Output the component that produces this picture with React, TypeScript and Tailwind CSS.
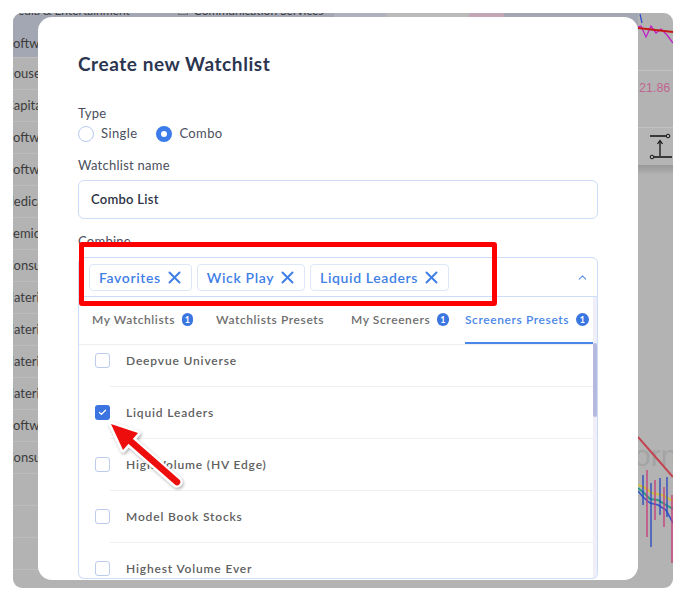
import { ChevronUp, Check } from 'lucide-react'

// the first letter of each sector slides under the left edge, so each row carries its own offset
const sectors = [
  { name: 'Household', shift: 'ml-[-9px]' },
  { name: 'Capital Markets', shift: 'ml-[-8px]' },
  { name: 'Software', shift: 'ml-[-7px]' },
  { name: 'Software', shift: 'ml-[-7px]' },
  { name: 'Medical Devices', shift: 'ml-[-11px]' },
  { name: 'Semiconductors', shift: 'ml-[-7px]' },
  { name: 'Consumer Finance', shift: 'ml-[-8px]' },
  { name: 'Materials', shift: 'ml-[-11px]' },
  { name: 'Materials', shift: 'ml-[-11px]' },
  { name: 'Materials', shift: 'ml-[-11px]' },
  { name: 'Materials', shift: 'ml-[-11px]' },
  { name: 'Software', shift: 'ml-[-7px]' },
  { name: 'Consumer Finance', shift: 'ml-[-8px]' },
  { name: '', shift: '' },
  { name: '', shift: '' },
  { name: '', shift: '' },
  { name: '', shift: '' },
]

const chips = ['Favorites', 'Wick Play', 'Liquid Leaders']

const tabs = [
  { label: 'My Watchlists', count: 1, width: 'w-[101px]', gap: '' },
  { label: 'Watchlists Presets', count: 0, width: 'w-[111px]', gap: 'ml-[23px]' },
  { label: 'My Screeners', count: 1, width: 'w-[98px]', gap: 'ml-[24px]' },
  { label: 'Screeners Presets', count: 1, width: 'w-[128px]', gap: 'ml-[16px]', active: true },
]

const presets = [
  { name: 'Deepvue Universe', checked: false },
  { name: 'Liquid Leaders', checked: true },
  { name: 'High Volume (HV Edge)', checked: false },
  { name: 'Model Book Stocks', checked: false },
  { name: 'Highest Volume Ever', checked: false },
]

function Badge({ n }: { n: number }) {
  return (
    <span className="ml-[7px] w-[13px] h-[13px] rounded-full bg-[#3a76e0] text-white text-[9px] font-bold leading-none flex items-center justify-center">
      {n}
    </span>
  )
}

function RemoveIcon() {
  return (
    <svg width="13" height="13" viewBox="0 0 13 13" className="ml-[7px]">
      <path d="M1.5 1.5 L11.5 11.5 M11.5 1.5 L1.5 11.5" stroke="currentColor" strokeWidth="2" strokeLinecap="round" />
    </svg>
  )
}

// dimmed table that sits behind the dialog
function SectorColumn() {
  return (
    <div className="flex-1 flex flex-col text-[13px] text-[#3c3c3c]">
      <div className="h-[44px] shrink-0 bg-[#a3a7b3] flex flex-col overflow-hidden">
        <div className="-mt-[8px] h-[12px] leading-[12px] flex items-center whitespace-nowrap text-[12px]">
          <span className="ml-[-6px]">Media &amp; Entertainment</span>
          <span className="ml-[48px] w-[10px] h-[8px] border border-[#777]" />
          <span className="ml-[6px]">Communication Services</span>
          <span className="ml-[10px] w-[52px] h-[12px] bg-[#aeb2bd]" />
          <span className="w-[83px] h-[12px] bg-[#bababa]" />
          <span className="w-[35px] h-[12px] bg-[#c2a6b6]" />
        </div>
        <div className="mt-auto pb-[6px] ml-[-7px] leading-[16px]">Software</div>
      </div>
      {sectors.map((s, i) => (
        <div
          key={i}
          className="h-[32px] shrink-0 border-t border-[#bdbdbd] flex items-center whitespace-nowrap"
        >
          <span className={s.shift}>{s.name}</span>
        </div>
      ))}
    </div>
  )
}

function SidePanel() {
  return (
    <div className="w-[35px] shrink-0 flex flex-col">
      <div className="h-[58px] shrink-0 border-b border-[#c2c2c2]">
        <svg width="35" height="58" viewBox="0 0 35 58">
          <polyline points="2,1 4,10" stroke="#2848d0" strokeWidth="1.2" fill="none" />
          <polyline
            points="0,14 3,13 8,24 13,13 18,20 23,16 29,22 35,30"
            stroke="#c020c8"
            strokeWidth="1.3"
            fill="none"
          />
          <line x1="0" y1="15" x2="35" y2="19" stroke="#c41818" strokeWidth="2" />
        </svg>
      </div>
      <div className="h-[57px] shrink-0 border-b border-[#c2c2c2] pt-[8px] pl-[1px] text-[12.5px] text-[#c06690] font-['Liberation_Sans',sans-serif]">
        21.86
      </div>
      <div className="h-[37px] shrink-0 bg-[#b5b5b5]">
        <svg width="35" height="37" viewBox="0 0 35 37">
          <line x1="12" y1="8" x2="28" y2="8" stroke="#111" strokeWidth="1.3" />
          <circle cx="30" cy="8" r="1.8" stroke="#111" strokeWidth="1" fill="#b5b5b5" />
          <line x1="22" y1="28" x2="22" y2="13" stroke="#111" strokeWidth="1.3" />
          <polyline points="19.5,16 22,12.5 24.5,16" stroke="#111" strokeWidth="1.2" fill="none" />
          <line x1="16" y1="29" x2="34" y2="29" stroke="#111" strokeWidth="1.3" />
          <circle cx="14" cy="29" r="1.8" stroke="#111" strokeWidth="1" fill="#b5b5b5" />
        </svg>
      </div>
      <div className="h-[10px] shrink-0 bg-gradient-to-b from-[#989898] to-[#b3b3b3]" />
      <div className="flex-1 relative">
        <svg width="35" height="413" viewBox="0 0 35 413" className="absolute left-0 top-0">
          <text x="-4" y="291" fontSize="30" fill="#a4a4a4" fontFamily="Liberation Sans, sans-serif">
            orn
          </text>
          <line x1="0" y1="262" x2="35" y2="302" stroke="#c24450" strokeWidth="2" />
          <polyline points="0,310 6,312 14,318 24,320 35,326" stroke="#d4be3c" strokeWidth="2" fill="none" />
          <polyline points="0,313 6,318 12,324 20,325 28,330 35,334" stroke="#2f9a84" strokeWidth="2" fill="none" />
          <polyline points="0,316 5,322 12,328 20,330 28,335 35,348" stroke="#3458c8" strokeWidth="1.6" fill="none" />
          <line x1="5" y1="300" x2="5" y2="330" stroke="#2846c0" strokeWidth="1.3" />
          <line x1="13" y1="308" x2="13" y2="372" stroke="#2846c0" strokeWidth="1.3" />
          <line x1="22" y1="303" x2="22" y2="340" stroke="#2846c0" strokeWidth="1.3" />
          <line x1="29" y1="302" x2="29" y2="342" stroke="#2846c0" strokeWidth="1.3" />
          <line x1="9" y1="295" x2="9" y2="362" stroke="#c83a78" strokeWidth="1.3" />
          <line x1="17" y1="305" x2="17" y2="345" stroke="#c83a78" strokeWidth="1.3" />
          <line x1="26" y1="312" x2="26" y2="352" stroke="#c83a78" strokeWidth="1.3" />
          <line x1="34" y1="320" x2="34" y2="388" stroke="#c83a78" strokeWidth="1.3" />
        </svg>
      </div>
    </div>
  )
}

function Radio({ label, selected }: { label: string; selected?: boolean }) {
  return (
    <label className="flex items-center">
      <span
        className={
          selected
            ? 'w-[16px] h-[16px] rounded-full border-[5px] border-[#3b7ce8] bg-white'
            : 'w-[16px] h-[16px] rounded-full border-[1.5px] border-[#b7c8ee] bg-white'
        }
      />
      <span className="ml-[7px] text-[13px] text-[#4a4f5c] tracking-[0.03em]">{label}</span>
    </label>
  )
}

function PresetRow({ name, checked, last }: { name: string; checked: boolean; last?: boolean }) {
  return (
    <div>
      <div className="h-[51px] flex items-center pl-[16px]">
        {checked ? (
          <span className="w-[15px] h-[15px] rounded-[3px] bg-[#3b74e0] flex items-center justify-center">
            <Check size={9} strokeWidth={3.5} color="white" />
          </span>
        ) : (
          <span className="w-[15px] h-[15px] rounded-[3px] border-[1.5px] border-[#bccbec] bg-white" />
        )}
        <span className="ml-[16px] text-[12px] font-semibold text-[#606060] tracking-[0.07em]">{name}</span>
      </div>
      {!last && <div className="ml-[31px] border-t border-[#efefef]" />}
    </div>
  )
}

function WatchlistDialog() {
  return (
    <div className="absolute left-[25px] top-[4px] w-[600px] h-[563px] bg-white rounded-[14px] overflow-hidden px-[40px] pt-[35px] flex flex-col">
      <h2 className="text-[19px] leading-[24px] font-bold text-[#2b3550] tracking-[0.03em]">Create new Watchlist</h2>

      <div className="mt-[28px] text-[13px] leading-[18px] text-[#4a4f5c] tracking-[0.02em]">Type</div>
      <div className="mt-[3px] h-[18px] flex items-center gap-[19px]">
        <Radio label="Single" />
        <Radio label="Combo" selected />
      </div>

      <div className="mt-[13px] text-[13px] leading-[18px] text-[#4a4f5c] tracking-[0.02em]">Watchlist name</div>
      <div className="mt-[6px] h-[39px] shrink-0 border border-[#cddcf7] rounded-[6px] flex items-center pl-[12px] text-[13px] font-semibold text-[#2d3445] tracking-[0.02em]">
        Combo List
      </div>

      <div className="mt-[13px] text-[13px] leading-[18px] text-[#4a4f5c] tracking-[0.02em]">Combine</div>
      <div className="mt-[7px] h-[40px] shrink-0 border border-[#cddcf7] rounded-t-[6px] flex items-center pl-[10px] pr-[8px]">
        <div className="flex gap-[5px]">
          {chips.map((c) => (
            <span
              key={c}
              className="h-[27px] pl-[9px] pr-[10px] border border-[#dde7f8] rounded-[4px] flex items-center text-[14px] font-semibold text-[#3f7fe6] tracking-[0.045em]"
            >
              {c}
              <RemoveIcon />
            </span>
          ))}
        </div>
        <ChevronUp size={13} strokeWidth={2} color="#5b8ee8" className="ml-auto" />
      </div>

      <div className="h-[282px] shrink-0 border border-t-0 border-[#cddcf7] rounded-b-[6px] flex overflow-hidden">
        <div className="flex-1 flex flex-col">
          <div className="h-[48px] shrink-0 border-b border-[#eeeeee] flex pl-[13px]">
            {tabs.map((t) => (
              <div
                key={t.label}
                className={`${t.width} ${t.gap} flex items-center border-b-2 ${
                  t.active ? 'border-[#4a86e8] text-[#4a86e8]' : 'border-transparent text-[#6e6e6e]'
                } text-[12px] font-semibold tracking-[0.05em] whitespace-nowrap`}
              >
                {t.label}
                {t.count > 0 && <Badge n={t.count} />}
              </div>
            ))}
          </div>
          <div className="flex-1 overflow-hidden">
            <div className="-mt-[10px]">
              {presets.map((p, i) => (
                <PresetRow key={p.name} name={p.name} checked={p.checked} last={i === presets.length - 1} />
              ))}
            </div>
          </div>
        </div>
        <div className="w-[7px] bg-[#efeffb]">
          <div className="mt-[46px] h-[74px] bg-[#b6b9de] rounded-[2px]" />
        </div>
      </div>
    </div>
  )
}

// red callout box and arrow drawn on top of the screen
function Callout() {
  return (
    <>
      <div className="absolute left-[79px] top-[242px] w-[418px] h-[64px] border-[5px] border-[#ff0000] rounded-[3px] pointer-events-none" />
      <svg className="absolute left-0 top-0 pointer-events-none" width="686" height="601" viewBox="0 0 686 601">
        <defs>
          <filter id="arrowShadow" x="-20%" y="-20%" width="140%" height="140%">
            <feDropShadow dx="1" dy="1.5" stdDeviation="1.5" floodColor="#000" floodOpacity="0.35" />
          </filter>
        </defs>
        <g filter="url(#arrowShadow)">
          <line x1="177" y1="482" x2="129" y2="440" stroke="white" strokeWidth="11" strokeLinecap="round" />
          <polygon points="111,424 138,433 123,450" fill="white" stroke="white" strokeWidth="5" strokeLinejoin="round" />
          <line x1="177" y1="482" x2="128" y2="439" stroke="#ee0a0a" strokeWidth="6.5" strokeLinecap="round" />
          <polygon points="111,424 138,433 123,450" fill="#ee0a0a" />
        </g>
      </svg>
    </>
  )
}

export default function App() {
  return (
    <div className="relative w-[686px] h-[601px] bg-white p-[13px] font-[Lato,sans-serif]">
      <div className="relative w-full h-full rounded-[9px] overflow-hidden bg-[#b3b3b3] flex">
        <SectorColumn />
        <SidePanel />
        <WatchlistDialog />
      </div>
      <Callout />
    </div>
  )
}
